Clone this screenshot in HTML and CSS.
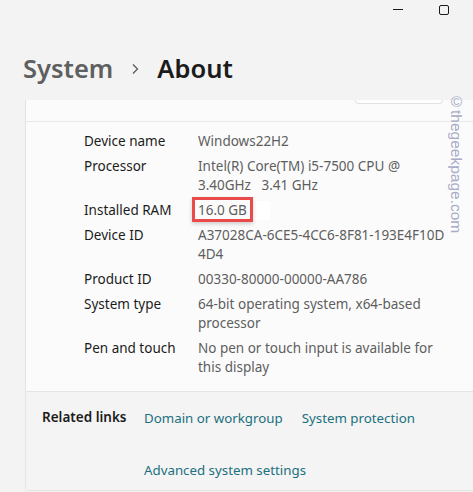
FILE: index.html
```html
<!DOCTYPE html>
<html>
<head>
<meta charset="utf-8">
<link rel="stylesheet" href="styles.css">
</head>
<body>
<div class="titlebar">
  <span class="ctl-min"></span>
  <span class="ctl-max"></span>
</div>
<h1 class="breadcrumb">
  <span class="crumb-parent">System</span>
  <svg class="crumb-chev" width="8" height="12" viewBox="0 0 8 12"><path d="M2 1.5 L6.5 6 L2 10.5" fill="none" stroke="#5d5d5d" stroke-width="1.3"/></svg>
  <span class="crumb-current">About</span>
</h1>
<div class="card">
  <div class="card-top">
    <div class="btn-stub"></div>
  </div>
  <div class="specs">
    <div class="label">Device name</div><div class="value">Windows22H2</div>
    <div class="label">Processor</div><div class="value">Intel(R) Core(TM) i5-7500 CPU @<br>3.40GHz&nbsp;&nbsp;&nbsp;3.41 GHz</div>
    <div class="label">Installed RAM</div><div class="value"><span class="highlight">16.0 GB</span><span class="patch"></span></div>
    <div class="label">Device ID</div><div class="value">A37028CA-6CE5-4CC6-8F81-193E4F10D<br>4D4</div>
    <div class="label">Product ID</div><div class="value">00330-80000-00000-AA786</div>
    <div class="label">System type</div><div class="value">64-bit operating system, x64-based<br>processor</div>
    <div class="label">Pen and touch</div><div class="value">No pen or touch input is available for<br>this display</div>
  </div>
  <div class="related">
    <div class="related-title">Related links</div>
    <div class="related-links">
      <a class="link">Domain or workgroup</a>
      <a class="link">System protection</a>
      <a class="link">Advanced system settings</a>
    </div>
  </div>
</div>
<div class="watermark">©thegeekpage.com</div>
</body>
</html>
```
FILE: styles.css
```css
html, body {
  margin: 0;
  padding: 0;
}
body {
  width: 473px;
  height: 492px;
  overflow: hidden;
  background: #f3f3f3;
  font-family: "Noto Sans", "Segoe UI", sans-serif;
  position: relative;
}
.titlebar {
  height: 20px;
  display: flex;
  justify-content: flex-end;
  align-items: flex-start;
  padding-right: 24px;
  gap: 36px;
}
.ctl-min {
  width: 10px;
  height: 1px;
  background: #1a1a1a;
  margin-top: 9px;
}
.ctl-max {
  width: 8px;
  height: 8px;
  border: 1px solid #1a1a1a;
  border-radius: 2px;
  margin-top: 5px;
}
.breadcrumb {
  margin: 0;
  padding: 30px 0 0 23px;
  display: flex;
  align-items: flex-start;
  font-size: 25.5px;
  font-weight: 600;
  line-height: 36px;
  box-sizing: border-box;
  height: 80px;
}
.crumb-parent {
  color: #5f5f5f;
}
.crumb-chev {
  margin: 13px 18px 0 18px;
}
.crumb-current {
  color: #1b1b1b;
}
.card {
  margin-left: 25px;
  width: 470px;
  height: 390px;
  border: 1px solid #e3e3e3;
  border-top: none;
  border-radius: 0 0 4px 4px;
  background: #fbfbfb;
  overflow: hidden;
  display: flex;
  flex-direction: column;
}
.card-top {
  height: 21px;
  border-bottom: 1px solid #e8e8e8;
}
.btn-stub {
  margin-left: 329px;
  width: 86px;
  height: 3px;
  background: #fefefe;
  border: 1px solid #e2e2e2;
  border-top: none;
  border-radius: 0 0 4px 4px;
}
.specs {
  display: grid;
  grid-template-columns: 114px 1fr;
  row-gap: 6px;
  padding: 10px 0 14px 58px;
  font-size: 13.5px;
  line-height: 19px;
  border-bottom: 1px solid #e5e5e5;
}
.label {
  color: #1b1b1b;
}
.value {
  color: #5e5e5e;
  white-space: nowrap;
}
.highlight {
  margin-left: -6px;
  padding: 1px 3px 0 3px;
  border: 3px solid #eb4a4a;
  box-shadow: 0 2px 4px rgba(0,0,0,0.18);
  position: relative;
  z-index: 1;
}
.patch {
  display: inline-block;
  width: 17px;
  height: 19px;
  background: #ffffff;
  vertical-align: top;
}
.related {
  flex: 1;
  background: #f4f4f4;
  display: flex;
  padding: 16px 0 0 16px;
}
.related-title {
  width: 102px;
  font-size: 13.5px;
  font-weight: 600;
  color: #1b1b1b;
  line-height: 19px;
}
.related-links {
  display: flex;
  flex-wrap: wrap;
  width: 300px;
  column-gap: 19px;
  row-gap: 22px;
  font-size: 13.3px;
  line-height: 19px;
}
.link {
  color: #19707e;
  text-decoration: none;
  padding-top: 1px;
}
.watermark {
  position: absolute;
  left: 447px;
  top: 93px;
  writing-mode: vertical-rl;
  font-family: "Liberation Sans", sans-serif;
  font-size: 15.5px;
  color: #a7abc6;
}
```
